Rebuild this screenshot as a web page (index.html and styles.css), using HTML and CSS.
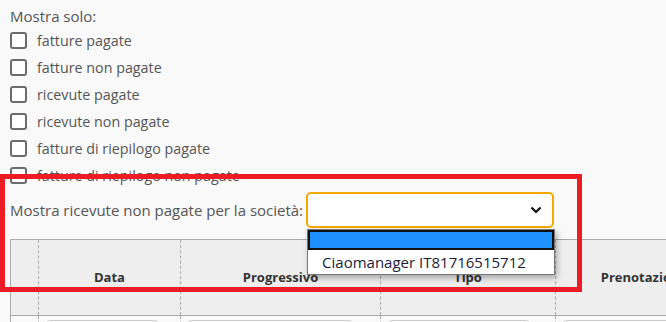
FILE: index.html
```html
<!DOCTYPE html>
<html>

<head>
    <title>Filtri ricevute</title>
    <link rel="stylesheet" href="styles.css">
</head>

<body>

    <div class="filters">
        <div class="filters-title">Mostra solo:</div>
        <div class="check-list">
            <label class="check-row"><span class="check-box"></span>fatture pagate</label>
            <label class="check-row"><span class="check-box"></span>fatture non pagate</label>
            <label class="check-row"><span class="check-box"></span>ricevute pagate</label>
            <label class="check-row"><span class="check-box"></span>ricevute non pagate</label>
            <label class="check-row"><span class="check-box"></span>fatture di riepilogo pagate</label>
            <label class="check-row"><span class="check-box"></span>fatture di riepilogo non pagate</label>
        </div>

        <div class="company-row">
            <span class="company-label">Mostra ricevute non pagate per la società:</span>
            <div class="company-select">
                <svg class="chevron" width="12" height="8" viewBox="0 0 12 8">
                    <path d="M1.5 1.5 L6 6 L10.5 1.5" fill="none" stroke="#111" stroke-width="2.2" />
                </svg>
                <div class="select-menu">
                    <div class="select-option selected">&nbsp;</div>
                    <div class="select-option">Ciaomanager IT81716515712</div>
                </div>
            </div>
        </div>
    </div>

    <div class="table-wrap">
        <table class="grid">
            <thead>
                <tr>
                    <th class="col-check"></th>
                    <th class="col-data">Data</th>
                    <th class="col-prog">Progressivo</th>
                    <th class="col-tipo">Tipo</th>
                    <th class="col-pren">Prenotazione</th>
                    <th class="col-more"></th>
                </tr>
            </thead>
            <tbody>
                <tr>
                    <td></td>
                    <td><div class="cell-input w-data"></div></td>
                    <td><div class="cell-input w-prog"></div></td>
                    <td><div class="cell-input w-tipo"></div></td>
                    <td><div class="cell-input w-pren"></div></td>
                    <td></td>
                </tr>
            </tbody>
        </table>
    </div>

    <!-- evidenziazione -->
    <div class="highlight"></div>

</body>

</html>
```

FILE: styles.css
```css
body {
    font-family: 'Open Sans', Arial, sans-serif;
    background-color: #f9f9f9;
    color: #555;
    margin: 0;
    padding: 0 0 0 10px;
    overflow: hidden;
    font-size: 14px;
}

.filters-title {
    padding-top: 5px;
    line-height: 22px;
    font-size: 15px;
}

.check-list {
    display: flex;
    flex-direction: column;
}

.check-row {
    display: flex;
    align-items: center;
    height: 27px;
    font-size: 14.3px;
}

.check-box {
    box-sizing: border-box;
    width: 17px;
    height: 17px;
    border: 2px solid #6b6b6b;
    border-radius: 3px;
    background: #fff;
    margin-right: 10px;
}

.company-row {
    display: flex;
    align-items: center;
    margin-top: 3px;
}

.company-label {
    font-size: 15px;
    margin-right: 3px;
}

.company-select {
    position: relative;
    box-sizing: border-box;
    width: 248px;
    height: 36px;
    border: 2px solid #f5a800;
    border-radius: 5px;
    background: #fff;
    display: flex;
    align-items: center;
    justify-content: flex-end;
    padding-right: 10px;
}

.select-menu {
    position: absolute;
    top: 35px;
    left: -1px;
    width: 248px;
    box-sizing: border-box;
    border: 1px solid #767676;
    background: #fff;
    box-shadow: 2px 3px 6px rgba(0, 0, 0, 0.3);
    z-index: 5;
}

.select-option {
    height: 24px;
    line-height: 24px;
    padding-left: 14px;
    font-size: 15px;
    color: #1b1b3a;
}

.select-option.selected {
    box-sizing: border-box;
    height: 20px;
    background: #1e90ff;
    border: 2px solid #111;
}

.table-wrap {
    margin-top: 11px;
    width: 900px;
}

.grid {
    border-collapse: collapse;
    table-layout: fixed;
    width: 900px;
    border-top: 1px solid #aaa;
    border-left: 1px solid #aaa;
}

.grid th {
    background: #eeeeee;
    height: 73px;
    font-size: 13px;
    font-weight: bold;
    color: #333;
    padding: 0 0 2px 0;
    border-bottom: 1px solid #aaa;
    border-left: 1px dashed #aaa;
    white-space: nowrap;
}

.grid th:first-child,
.grid td:first-child {
    border-left: none;
}

.grid td {
    border-left: 1px dashed #aaa;
    padding: 4px 0 0 5px;
    vertical-align: top;
    height: 20px;
}

.col-check { width: 27px; }
.col-data { width: 141px; }
.col-prog { width: 199px; }
.col-tipo { width: 174px; }
.col-pren { width: 176px; }
.col-more { width: 183px; }

.cell-input {
    box-sizing: border-box;
    height: 20px;
    background: #fff;
    border: 1px solid #ccc;
    border-radius: 6px;
}

.w-data { width: 115px; margin-left: 1px; }
.w-prog { width: 168px; }
.w-tipo { width: 144px; margin-left: 1px; }
.w-pren { width: 150px; }

.highlight {
    position: absolute;
    left: 0;
    top: 174px;
    width: 582px;
    height: 118px;
    box-sizing: border-box;
    border: 5px solid #ed1c24;
    pointer-events: none;
    z-index: 4;
}
```
